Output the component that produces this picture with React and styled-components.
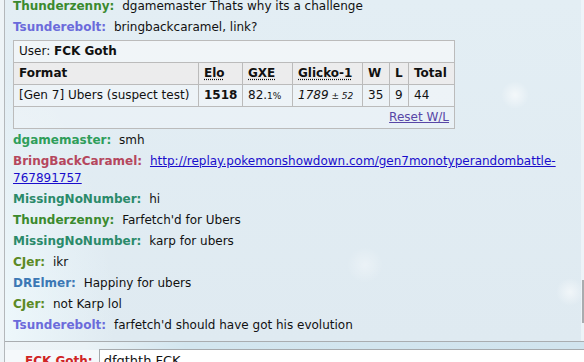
import React from "react";
import styled, { createGlobalStyle } from "styled-components";

const GlobalStyle = createGlobalStyle`
  html, body {
    margin: 0;
    padding: 0;
  }
  body {
    font-family: "DejaVu Sans", Verdana, sans-serif;
    font-size: 12px;
    color: #111;
    background: #eef4f7;
    overflow: hidden;
  }
`;

const Page = styled.div`
  height: 362px;
  padding-left: 4px;
  display: flex;
  flex-direction: column;
  overflow: hidden;
`;

const Panel = styled.div`
  flex: 1;
  display: flex;
  flex-direction: column;
  border-left: 1px solid #b4b8bb;
`;

const LogRow = styled.div`
  height: 341px;
  flex-shrink: 0;
  display: flex;
  border-bottom: 1px solid #a9adb0;
  background:
    radial-gradient(circle at 510px 95px, rgba(255, 255, 255, 0.6) 0, rgba(255, 255, 255, 0) 14px),
    radial-gradient(circle at 565px 292px, rgba(255, 255, 255, 0.55) 0, rgba(255, 255, 255, 0) 14px),
    radial-gradient(circle at 360px 265px, rgba(255, 255, 255, 0.35) 0, rgba(255, 255, 255, 0) 18px),
    radial-gradient(ellipse 120px 260px at -10px 330px, rgba(240, 250, 253, 0.9) 0, rgba(240, 250, 253, 0) 100%),
    linear-gradient(180deg, #e3eef4 0%, #dfeaf1 100%);
`;

const Log = styled.div`
  flex: 1;
  min-width: 0;
  display: flex;
  flex-direction: column;
  justify-content: flex-end;
  overflow: hidden;
  padding-bottom: 5px;
`;

const ScrollTrack = styled.div`
  width: 3px;
  background: rgba(245, 249, 251, 0.6);
  display: flex;
  flex-direction: column;
  align-items: flex-end;
`;

const ScrollThumb = styled.div`
  width: 2px;
  height: 43px;
  margin-top: 280px;
  background: #a8acaf;
`;

const Chat = styled.div`
  flex-shrink: 0;
  padding: 2px 8px;
  line-height: 17px;
`;

const Name = styled.strong`
  color: ${(p) => p.$color};
  font-weight: bold;
`;

const Msg = styled.em`
  font-style: normal;
  padding: 1px 4px 1px 4px;
  color: #111;
`;

const Link = styled.a`
  color: #1a0dcc;
  text-decoration: underline;
`;

const Block = styled.div`
  flex-shrink: 0;
  padding: 2px 8px 1px;
`;

const Ladder = styled.table`
  border-collapse: collapse;
  table-layout: fixed;
  width: 441px;
  line-height: 13px;

  th,
  td {
    border: 1px solid #bbbbbb;
    padding: 4px 5px;
    text-align: left;
    white-space: nowrap;
  }
`;

const Col = styled.col`
  width: ${(p) => p.$w}px;
`;

const TitleCell = styled.td`
  background: rgba(246, 248, 250, 0.7);
`;

const Head = styled.th`
  background: rgba(236, 236, 236, 0.95);
  font-weight: bold;
  color: #111;
`;

const Abbr = styled.abbr`
  text-decoration: underline dotted;
  text-underline-offset: 2px;
`;

const Cell = styled.td`
  background: rgba(246, 248, 250, 0.55);
  font-weight: ${(p) => (p.$bold ? "bold" : "normal")};
  font-style: ${(p) => (p.$italic ? "italic" : "normal")};
`;

const Small = styled.small`
  font-size: 9px;
  line-height: 9px;
`;

const FootCell = styled.td`
  && {
    text-align: right;
  }
  background: rgba(246, 248, 250, 0.4);
`;

const ResetLink = styled.a`
  color: #5846a6;
  text-decoration: underline;
`;

const Strip = styled.div`
  height: 8px;
  flex-shrink: 0;
  background: linear-gradient(90deg, #eef4f7 0px, #eaf2f6 80px, #d3e6ef 180px, #d1e4ee 100%);
`;

const Compose = styled.div`
  flex: 1;
  display: flex;
  align-items: flex-start;
  background: #f5f9fb;
  padding-left: 20px;
`;

const Who = styled.strong`
  color: #d02424;
  font-weight: bold;
  padding: 4px 6px 0 0;
  line-height: 15px;
`;

const Input = styled.div`
  flex: 1;
  margin-top: -1px;
  border: 1px solid #a6aaad;
  border-right: none;
  background: #fff;
  padding: 3px 4px;
  font-size: 13px;
  line-height: 16px;
  height: 30px;
`;

const messages = [
  { name: "Thunderzenny", color: "#3b8a2e", text: "dgamemaster Thats why its a challenge" },
  { name: "Tsunderebolt", color: "#6b6bdb", text: "bringbackcaramel, link?" },
  { ladder: true },
  { name: "dgamemaster", color: "#2f9e5a", text: "smh" },
  {
    name: "BringBackCaramel",
    color: "#b5475d",
    link: "http://replay.pokemonshowdown.com/gen7monotyperandombattle-767891757",
  },
  { name: "MissingNoNumber", color: "#2b8a6a", text: "hi" },
  { name: "Thunderzenny", color: "#3b8a2e", text: "Farfetch'd for Ubers" },
  { name: "MissingNoNumber", color: "#2b8a6a", text: "karp for ubers" },
  { name: "CJer", color: "#5c8a25", text: "ikr" },
  { name: "DRElmer", color: "#3c78b5", text: "Happiny for ubers" },
  { name: "CJer", color: "#5c8a25", text: "not Karp lol" },
  { name: "Tsunderebolt", color: "#6b6bdb", text: "farfetch'd should have got his evolution" },
];

const LadderTable = () => (
  <Block>
    <Ladder>
      <colgroup>
        {[185, 44, 50, 70, 27, 19, 46].map((w, i) => (
          <Col key={i} $w={w} />
        ))}
      </colgroup>
      <tbody>
        <tr>
          <TitleCell colSpan={7}>
            User: <strong>FCK Goth</strong>
          </TitleCell>
        </tr>
        <tr>
          <Head>Format</Head>
          <Head>
            <Abbr title="Elo rating">Elo</Abbr>
          </Head>
          <Head>
            <Abbr title="user's percentage chance of winning a random battle">GXE</Abbr>
          </Head>
          <Head>
            <Abbr title="Glicko-1 rating">Glicko-1</Abbr>
          </Head>
          <Head>W</Head>
          <Head>L</Head>
          <Head>Total</Head>
        </tr>
        <tr>
          <Cell>[Gen 7] Ubers (suspect test)</Cell>
          <Cell $bold>1518</Cell>
          <Cell>
            82.<Small>1%</Small>
          </Cell>
          <Cell $italic>
            1789<Small> ± 52</Small>
          </Cell>
          <Cell>35</Cell>
          <Cell>9</Cell>
          <Cell>44</Cell>
        </tr>
        <tr>
          <FootCell colSpan={7}>
            <ResetLink href="#reset">Reset W/L</ResetLink>
          </FootCell>
        </tr>
      </tbody>
    </Ladder>
  </Block>
);

export default function App() {
  return (
    <>
      <GlobalStyle />
      <Page>
        <Panel>
          <LogRow>
            <Log>
              {messages.map((m, i) =>
                m.ladder ? (
                  <LadderTable key={i} />
                ) : (
                  <Chat key={i}>
                    <Name $color={m.color}>{m.name}:</Name>{" "}
                    <Msg>{m.link ? <Link href={m.link}>{m.link}</Link> : m.text}</Msg>
                  </Chat>
                )
              )}
            </Log>
            <ScrollTrack>
              <ScrollThumb />
            </ScrollTrack>
          </LogRow>
          <Strip />
          <Compose>
            <Who>FCK Goth:</Who>
            <Input>dfgthth FCK</Input>
          </Compose>
        </Panel>
      </Page>
    </>
  );
}
